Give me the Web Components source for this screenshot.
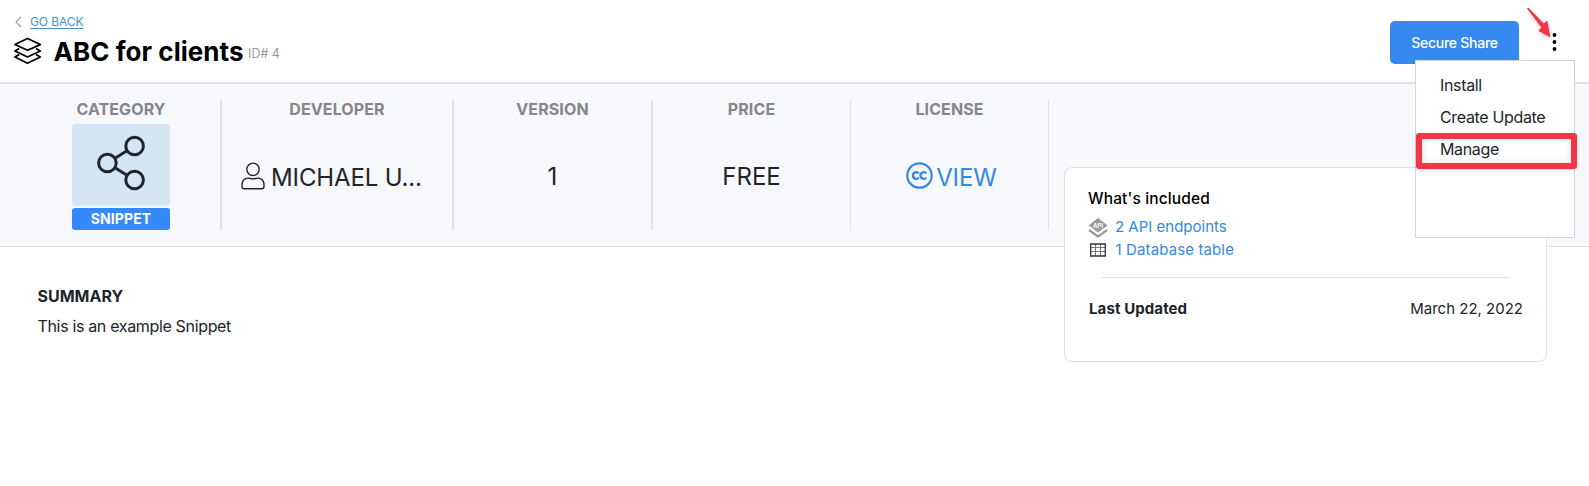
<!DOCTYPE html>
<html lang="en"><head><meta charset="utf-8"><title>ABC for clients</title>
<style>
html,body{margin:0;height:486px;overflow:hidden;background:#fff}
body{font-family:Inter,"Liberation Sans",sans-serif;color:#212529;position:relative}
</style></head><body>
<app-page></app-page>
<script>
const define=(name,html)=>customElements.define(name,class extends HTMLElement{
  constructor(){super();const t=document.createElement('template');t.innerHTML=html;
  this.attachShadow({mode:'open'}).append(t.content.cloneNode(true));}
});

define('page-header',`<style>
:host{display:flex;box-sizing:border-box;height:84px;border-bottom:2px solid #e0e1e5;background:#fff;justify-content:space-between}
.left{display:flex;flex-direction:column;padding-left:14px}
.back{display:flex;align-items:center;height:16px;margin-top:13px;font-size:12px}
.back svg{margin:1px 8px 0 0}
a{color:#3d94dc;text-decoration:underline;text-underline-offset:2px;letter-spacing:-.1px}
.title{display:flex;height:40px;margin-top:3px;align-items:center}
.title svg{margin-top:-2px}
h1{margin:0 0 0 11.5px;font-size:26px;line-height:40px;font-weight:700;color:#000;white-space:nowrap;letter-spacing:.04px}
.id{font-size:12.500px;color:#999;margin:3px 0 0 4.500px;line-height:20px}
.right{display:flex;padding-right:29px}
button{margin:21px 29px 0 0;width:129px;height:43px;border:0;border-radius:5px;background:#3589f0;color:#fff;font:500 14px Inter,sans-serif;letter-spacing:-.25px;padding:0}
.dots{margin-top:32px}
svg{display:block}
</style>
<div class="left"><div class="back"><svg width="8" height="12" viewBox="0 0 8 12" fill="none" stroke="#999" stroke-width="1.1"><path d="M7 1 2 6l5 5"/></svg><a>GO BACK</a></div>
<div class="title"><svg width="28" height="28" viewBox="0 0 28 28" fill="none" stroke="#000" stroke-width="1.7" stroke-linejoin="round"><path d="M13.500 1.500 26.300 7.600 13.500 13.300.9 7.600Z"/><path d="M5.200 11.500 .9 14l12.600 6 12.800-6L22 11.500"/><path d="M5.200 17.500 .9 20l12.600 6.200 12.800-6.200L22 17.500"/></svg><h1>ABC for clients</h1><span class="id">ID# 4</span></div></div>
<div class="right"><button>Secure Share</button><svg class="dots" width="12" height="20" viewBox="0 0 12 20"><circle cx="6.500" cy="3" r="1.900"/><circle cx="6.500" cy="10" r="1.900"/><circle cx="6.500" cy="17" r="1.900"/></svg></div>`);

define('stat-column',`<style>
:host{display:flex;flex-direction:column;box-sizing:border-box;height:130px;border-right:2px solid #e0e1e5;align-items:center}
.label{font-size:16px;font-weight:700;line-height:18px;color:#868686;letter-spacing:.1px}
.value{display:flex;flex:1;box-sizing:border-box;padding-top:6px;align-items:center;font-size:24px;white-space:nowrap;width:100%;justify-content:center}
</style><div class="label"><slot name="label"></slot></div><div class="value"><slot></slot></div>`);

define('category-badge',`<style>
:host{display:flex;flex-direction:column;width:98px;height:106px;gap:2px}
.pic{height:82px;background:#d4e5f3;border-radius:4px}
.tag{height:22px;border-radius:3px;background:#3589fc;color:#fff;font-size:14px;font-weight:700;line-height:22px;text-align:center;letter-spacing:.1px}
</style><div class="pic"><svg width="98" height="82" viewBox="0 0 98 82" fill="none" stroke="#212529" stroke-width="3"><circle cx="35.400" cy="39" r="8.800"/><circle cx="62.600" cy="22" r="8.800"/><circle cx="62.600" cy="56" r="8.800"/><path d="m43 34.300 12-7.500M43 43.700l12 7.500"/></svg></div><div class="tag">SNIPPET</div>`);

define('user-icon',`<style>:host{display:block;margin:0 6px 3px 0}svg{display:block}</style>
<svg width="24" height="28" viewBox="0 0 24 28" fill="none" stroke="#212529" stroke-width="1.400"><circle cx="12" cy="7.300" r="6.200"/><path d="M7 16.100c2 0 3 .8 5 .8s3-.8 5-.8c3.500 0 6 2.800 6 6.300v2.100c0 1.500-.8 2.300-2.300 2.300H3.300C1.800 26.800 1 26 1 24.500v-2.100c0-3.500 2.500-6.300 6-6.300Z"/></svg>`);

define('cc-icon',`<style>:host{display:block;margin:0 3px 3px 0}svg{display:block}</style>
<svg width="27" height="27" viewBox="0 0 27 27" fill="none" stroke="#3589e0"><circle cx="13.500" cy="13.500" r="12.200" stroke-width="2.200"/><path stroke-width="2.400" d="M12.700 11.400C11.200 9.300 7 9.900 7 13.500s4.200 4.200 5.700 2.100M20.200 11.400c-1.500-2.100-5.700-1.500-5.700 2.100s4.200 4.200 5.700 2.100"/></svg>`);

define('stats-bar',`<style>
:host{display:flex;box-sizing:border-box;height:163px;padding:16px 0 0 22px;background:#f7f8fc;border-bottom:1px solid #e0e1e5}
.a{width:200px}.b{width:232px}.c{width:199px}.d{width:198px}.e{width:198px}
.d,.e{border-right-width:1px}
.name{margin-right:11px;letter-spacing:-.15px}
.plain{margin-bottom:2px}
.view{color:#3589e0;margin-right:-4px;letter-spacing:-.1px}
</style>
<stat-column class="a"><span slot="label">CATEGORY</span><category-badge></category-badge></stat-column>
<stat-column class="b"><span slot="label">DEVELOPER</span><user-icon></user-icon><span class="name">MICHAEL U...</span></stat-column>
<stat-column class="c"><span slot="label">VERSION</span><span class="plain">1</span></stat-column>
<stat-column class="d"><span slot="label">PRICE</span><span class="plain">FREE</span></stat-column>
<stat-column class="e"><span slot="label">LICENSE</span><cc-icon></cc-icon><span class="view">VIEW</span></stat-column>`);

define('summary-block',`<style>
:host{display:block;padding:39px 0 0 37.5px;font-size:16px}
h2{margin:0;font-size:16px;line-height:20px;font-weight:700}
p{margin:10px 0 0;line-height:20px;letter-spacing:-.34px}
</style><h2>SUMMARY</h2><p>This is an example Snippet</p>`);

define('details-card',`<style>
:host{display:block;position:absolute;left:1064px;top:167px;box-sizing:border-box;width:483px;height:195px;border:1px solid #e2e3e6;border-radius:8px;background:#fff;font-size:15px;padding:20px 23px 0}
h3{margin:0;font-size:15.500px;font-weight:500;color:#000;line-height:22px;letter-spacing:.13px}
.row{display:flex;align-items:center;height:23px;color:#3589dc}
.row svg{display:block;margin-right:7px}
.first{margin-top:5px}
.first svg{margin-top:2px}
.t{letter-spacing:.12px;margin-left:.5px}
hr{height:1px;border:0;background:#dfe0e3;margin:16px 13px 0}
.last{display:flex;justify-content:space-between;line-height:22px;margin-top:20px}
.last b{margin-left:1px;letter-spacing:.1px}
</style><h3>What's included</h3>
<div class="row first"><svg width="20" height="22" viewBox="0 0 20 22"><path fill="#999" d="M10 1 19.500 8.500 10 15.500.5 8.500Z"/><path fill="none" stroke="#999" stroke-width="2.200" d="m1 13 9 6.600 9-6.600"/><text x="10" y="10.500" text-anchor="middle" font-size="6" font-weight="700" fill="#fff">API</text></svg><span>2 API endpoints</span></div>
<div class="row"><svg width="20" height="14" viewBox="0 0 20 14" fill="none" stroke="#333"><path d="M3 4.500h14M3 8.500h14M7.500 1v12M12.500 1v12" stroke="#777"/><path d="M2.700 1h14.600v12H2.700Z" stroke-width="1.300"/></svg><span class="t">1 Database table</span></div>
<hr><div class="last"><b>Last Updated</b><span>March 22, 2022</span></div>`);

define('action-menu',`<style>
:host{display:block;position:absolute;left:1415px;top:60px;box-sizing:border-box;width:160px;height:178px;border:1px solid #d3d4d8;background:#fff;font-size:16px;padding:8px 0 0;letter-spacing:-.34px}
div{line-height:32px;padding-left:24px}
.hl{position:absolute;left:-.5px;top:71.5px;box-sizing:border-box;width:161.5px;height:36.5px;border:6.500px solid #f23645;border-radius:3px;box-shadow:0 1px 4px #0002,inset 0 0 7px #0002}
</style><div>Install</div><div>Create Update</div><div>Manage</div><span class="hl"></span>`);

define('pointer-arrow',`<style>:host{display:block;position:absolute;left:1524px;top:5px}svg{display:block;filter:drop-shadow(0 1px 2px #0003)}</style>
<svg width="32" height="36" viewBox="0 0 32 36"><path fill="#f23645" d="M3 3.500 4.500 2.800 19.800 18.500 23.300 15.500 26.500 32.500 14.500 26 17.300 22.500Z"/></svg>`);

define('app-page',`<style>:host{display:block}</style><page-header></page-header><stats-bar></stats-bar><summary-block></summary-block><details-card></details-card><action-menu></action-menu><pointer-arrow></pointer-arrow>`);
</script></body></html>
